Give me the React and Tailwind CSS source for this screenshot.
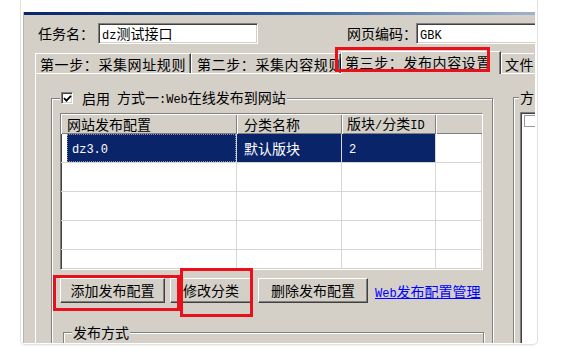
import React from 'react';

const sunken =
  'border border-t-[#808080] border-l-[#808080] border-b-white border-r-white shadow-[inset_1px_1px_0_#404040,inset_-1px_-1px_0_#d4d0c8]';
const raised =
  'border border-t-white border-l-white border-b-[#404040] border-r-[#404040] shadow-[inset_-1px_-1px_0_#808080] bg-[#d4d0c8]';

// ASCII runs are drawn in a half-width mono face, like SimSun does
function Mixed({ text }) {
  return (
    <span>
      {text.split(/([\x21-\x7e]+)/).map((part, i) =>
        /^[\x21-\x7e]+$/.test(part) ? (
          <span key={i} className="font-['Liberation_Mono',monospace] text-[12px]">
            {part}
          </span>
        ) : (
          part
        )
      )}
    </span>
  );
}

function GroupBox({ legend, legendClass = '', className = '', children }) {
  return (
    <div className={`relative shrink-0 border border-[#808080] shadow-[inset_1px_1px_0_#fff,1px_1px_0_#fff] ${className}`}>
      <div className={`absolute -top-[9px] h-[16px] flex items-center bg-[#d4d0c8] px-[1px] leading-[16px] whitespace-nowrap ${legendClass}`}>
        {legend}
      </div>
      {children}
    </div>
  );
}

function Checkbox({ checked }) {
  return (
    <div className={`w-[12px] h-[12px] bg-white ${sunken} flex items-center justify-center shrink-0`}>
      {checked && (
        <svg width="9" height="9" viewBox="0 0 9 9">
          <path d="M1 4.2 L3.4 6.6 L8 1.8" stroke="#000" strokeWidth="1.8" fill="none" />
        </svg>
      )}
    </div>
  );
}

const rows = [
  { name: 'dz3.0', cat: '默认版块', id: '2', selected: true },
  {},
  {},
  {},
  {},
];

export default function App() {
  return (
    <div className="relative w-[569px] h-[359px] overflow-hidden bg-white font-['Noto_Sans_CJK_SC','Noto_Sans',sans-serif] text-[14px] text-black">
      <div className="ml-[20px] w-[518px] h-[345px] border border-t-0 border-[#e2e2e2] rounded-b-[5px] shadow-[0_1px_2px_rgba(0,0,0,0.06)] pt-[12px] px-[2px] pb-[1px] flex flex-col">
        <div className="flex-1 bg-[#d4d0c8] overflow-hidden flex flex-col border-l border-[#b8b5ad]">
          {/* title bar edge */}
          <div className="h-[3px] shrink-0 bg-linear-to-r from-[#0a246a] via-[#2d5a96] to-[#9fb3cc]" />

          {/* task name row */}
          <div className="flex items-center mt-[8px] h-[21px] pl-[14px] shrink-0 whitespace-nowrap">
            <span className="w-[60px] shrink-0">任务名：</span>
            <div className={`w-[160px] h-[21px] shrink-0 bg-white ${sunken} flex items-center pl-[3px]`}>
              <Mixed text="dz测试接口" />
            </div>
            <span className="ml-[89px] w-[69px] shrink-0">网页编码：</span>
            <div className={`w-[150px] h-[21px] shrink-0 bg-white ${sunken} flex items-center pl-[3px]`}>
              <Mixed text="GBK" />
            </div>
          </div>

          {/* tabs */}
          <div className="flex items-end h-[22px] mt-[7px] pl-[11px] shrink-0 whitespace-nowrap tracking-[0.6px]">
            <div className="w-[156px] h-[20px] shrink-0 border-t border-l border-white border-r border-r-[#404040] shadow-[inset_-1px_0_0_#808080] pl-[4px] pt-[1px] leading-[18px]">
              第一步：采集网址规则
            </div>
            <div className="w-[150px] h-[20px] shrink-0 border-t border-l border-white border-r border-r-[#404040] shadow-[inset_-1px_0_0_#808080] pl-[5px] pt-[1px] leading-[18px]">
              第二步：采集内容规则
            </div>
            <div className="relative z-10 w-[160px] h-[23px] -mb-[1px] shrink-0 bg-[#d4d0c8] border-t border-l border-white border-r border-r-[#404040] shadow-[inset_-1px_0_0_#808080] pl-[3px] leading-[21px]">
              第三步：发布内容设置
            </div>
            <div className="h-[20px] shrink-0 border-t border-l border-white pl-[3px] pt-[1px] leading-[18px]">
              文件
            </div>
          </div>

          {/* tab panel */}
          <div className="flex-1 ml-[11px] border-t border-l border-white flex items-start pl-[15px]">
            <GroupBox
              className="mt-[24px] w-[442px] h-[300px] pl-[8px] pt-[14px]"
              legendClass="left-[8px]"
              legend={
                <>
                  <Checkbox checked />
                  <span className="ml-[9px]">启用</span>
                  <span className="ml-[7px]">
                    <Mixed text="方式一:Web在线发布到网站" />
                  </span>
                </>
              }
            >
              {/* list view */}
              <div className={`w-[423px] h-[157px] bg-white ${sunken} overflow-hidden`}>
                <div className="grid grid-cols-[176px_105px_94px_48px]">
                  {['网站发布配置', '分类名称', '版块/分类ID', ''].map((h, i) => (
                    <div
                      key={i}
                      className={`h-[20px] bg-[#d4d0c8] shadow-[inset_1px_1px_0_#fff,inset_-1px_-1px_0_#808080] flex items-center whitespace-nowrap ${i === 0 ? 'pl-[6px]' : i === 1 ? 'pl-[7px]' : 'pl-[5px]'}`}
                    >
                      <Mixed text={h} />
                    </div>
                  ))}
                  {rows.map((r, ri) => (
                    <React.Fragment key={ri}>
                      <div className="h-[29px] border-r border-b border-[#d8d6d0] pl-[6px]">
                        <div className={`h-full flex items-center pl-[4px] ${r.selected ? 'bg-[#0a246a] text-white border border-dotted border-[#8a8f9f]' : ''}`}>
                          {r.name && <Mixed text={r.name} />}
                        </div>
                      </div>
                      <div className={`h-[29px] border-r border-b border-[#d8d6d0] flex items-center pl-[7px] ${r.selected ? 'bg-[#0a246a] text-white' : ''}`}>
                        {r.cat}
                      </div>
                      <div className={`h-[29px] border-r border-b border-[#d8d6d0] flex items-center pl-[7px] ${r.selected ? 'bg-[#0a246a] text-white' : ''}`}>
                        {r.id && <Mixed text={r.id} />}
                      </div>
                      <div className="h-[29px] border-b border-[#d8d6d0]" />
                    </React.Fragment>
                  ))}
                </div>
              </div>

              {/* buttons */}
              <div className="flex items-center mt-[8px] h-[25px] whitespace-nowrap">
                <button className={`w-[105px] h-[25px] shrink-0 ${raised}`}>添加发布配置</button>
                <button className={`ml-[5px] w-[82px] h-[25px] shrink-0 ${raised}`}>修改分类</button>
                <button className={`ml-[6px] w-[110px] h-[25px] shrink-0 ${raised}`}>删除发布配置</button>
                <a className="ml-[7px] mt-[3px] text-[#0000ff] underline">
                  <Mixed text="Web发布配置管理" />
                </a>
              </div>

              <GroupBox
                className="ml-[3px] mt-[29px] w-[421px] h-[40px]"
                legendClass="left-[8px]"
                legend={<span>发布方式</span>}
              />
            </GroupBox>

            <GroupBox
              className="ml-[20px] mt-[23px] w-[120px] h-[300px] pl-[6px] pt-[14px]"
              legendClass="left-[5px]"
              legend={<span>方</span>}
            >
              <div className={`w-[110px] h-[260px] bg-white ${sunken} pl-[3px] pt-[2px]`}>
                <div className="w-[12px] h-[12px] bg-white border border-[#9a9a9a]" />
              </div>
            </GroupBox>
          </div>
        </div>
      </div>

      {/* red annotation boxes */}
      <div className="absolute z-20 left-[335px] top-[47px] w-[155px] h-[25px] border-[3px] border-[#e8101a]" />
      <div className="absolute z-20 left-[53px] top-[275px] w-[127px] h-[36px] border-[3px] border-[#e8101a]" />
      <div className="absolute z-20 left-[180px] top-[268px] w-[73px] h-[49px] border-[3px] border-[#e8101a]" />
    </div>
  );
}
